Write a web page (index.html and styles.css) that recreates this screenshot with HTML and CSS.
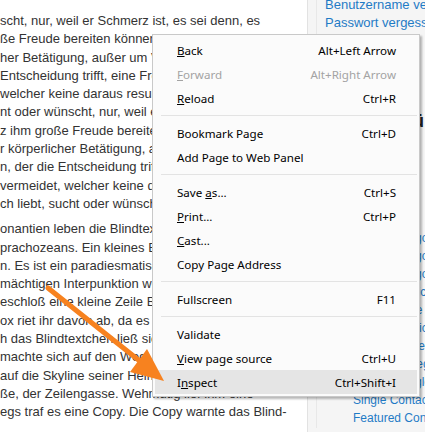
FILE: index.html
```html
<!DOCTYPE html>
<html lang="de">
<head>
<meta charset="utf-8">
<title>Kontextmenü</title>
<link rel="stylesheet" href="styles.css">
</head>
<body>
<div class="page">
  <main class="content">
    <p class="para">
      <span class="ln">scht, nur, weil er Schmerz ist, es sei denn, es</span>
      <span class="ln">ße Freude bereiten können. Um ein triviales</span>
      <span class="ln">her Betätigung, außer um Vorteile daraus zu</span>
      <span class="ln">Entscheidung trifft, eine Freude zu genießen, die</span>
      <span class="ln">welcher keine daraus resultierende Freude</span>
      <span class="ln">nt oder wünscht, nur, weil er Schmerz ist, es sei</span>
      <span class="ln">z ihm große Freude bereiten können. Um ein</span>
      <span class="ln">r körperlicher Betätigung, außer um Vorteile</span>
      <span class="ln">n, der die Entscheidung trifft, eine Freude zu</span>
      <span class="ln">vermeidet, welcher keine daraus resultierende</span>
      <span class="ln">ch liebt, sucht oder wünscht, nur, weil er</span>
    </p>
    <p class="para">
      <span class="ln">onantien leben die Blindtexte. Abgeschieden</span>
      <span class="ln">prachozeans. Ein kleines Bächlein namens Duden</span>
      <span class="ln">n. Es ist ein paradiesmatisches Land, in dem</span>
      <span class="ln">mächtigen Interpunktion werden die Blindtexte</span>
      <span class="ln">eschloß eine kleine Zeile Blindtext, ihr Name</span>
      <span class="ln">ox riet ihr davon ab, da es dort wimmele von</span>
      <span class="ln">h das Blindtextchen ließ sich nicht beirren. Es</span>
      <span class="ln">machte sich auf den Weg. Als es die ersten</span>
      <span class="ln">auf die Skyline seiner Heimatstadt</span>
      <span class="ln">ße, der Zeilengasse. Wehmütig lief ihm eine</span>
      <span class="ln">egs traf es eine Copy. Die Copy warnte das Blind-</span>
    </p>
  </main>
  <aside class="sidebar">
    <div class="module">
      <ul class="login-links">
        <li><a href="#">Benutzername vergessen?</a></li>
        <li><a href="#">Passwort vergessen?</a></li>
      </ul>
      <h3 class="mod-title">Hauptmenü</h3>
      <ul class="menu-links">
        <li><a href="#">Home</a></li>
        <li><a href="#">Article Categories</a></li>
        <li><a href="#">Article Category Blog</a></li>
        <li><a href="#">Article Category List</a></li>
        <li><a href="#">Archived Articles</a></li>
        <li><a href="#">Single Article</a></li>
        <li><a href="#">Featured Articles</a></li>
        <li><a href="#">Create Article</a></li>
        <li><a href="#">Contact Categories</a></li>
        <li><a href="#">Contact Single Category</a></li>
        <li><a href="#">Single Contact</a></li>
        <li><a href="#">Featured Contacts</a></li>
      </ul>
    </div>
  </aside>
</div>

<svg class="arrow" width="425" height="432" viewBox="0 0 425 432" aria-hidden="true">
  <line x1="48" y1="288" x2="141" y2="362" stroke="#f7821f" stroke-width="5" stroke-linecap="round"/>
  <polygon points="164,381 130,372 147,349" fill="#f7821f"/>
</svg>

<div class="ctx-menu" role="menu">
  <div class="item"><span class="label"><u>B</u>ack</span><span class="key">Alt+Left Arrow</span></div>
  <div class="item disabled"><span class="label"><u>F</u>orward</span><span class="key">Alt+Right Arrow</span></div>
  <div class="item"><span class="label"><u>R</u>eload</span><span class="key">Ctrl+R</span></div>
  <div class="sep"></div>
  <div class="item"><span class="label">Bookmark Page</span><span class="key">Ctrl+D</span></div>
  <div class="item"><span class="label">Add Page to Web Panel</span><span class="key"></span></div>
  <div class="sep"></div>
  <div class="item"><span class="label">Save <u>a</u>s...</span><span class="key">Ctrl+S</span></div>
  <div class="item"><span class="label"><u>P</u>rint...</span><span class="key">Ctrl+P</span></div>
  <div class="item"><span class="label"><u>C</u>ast...</span><span class="key"></span></div>
  <div class="item"><span class="label">Copy Page Address</span><span class="key"></span></div>
  <div class="sep"></div>
  <div class="item"><span class="label">Fullscreen</span><span class="key">F11</span></div>
  <div class="sep"></div>
  <div class="item"><span class="label">Validate</span><span class="key"></span></div>
  <div class="item"><span class="label"><u>V</u>iew page source</span><span class="key">Ctrl+U</span></div>
  <div class="item active"><span class="label">I<u>n</u>spect</span><span class="key">Ctrl+Shift+I</span></div>
</div>
</body>
</html>
```

FILE: styles.css
```css
html, body {
  margin: 0;
  padding: 0;
}

body {
  width: 425px;
  height: 432px;
  overflow: hidden;
  background: #ffffff;
  position: relative;
  font-family: "Liberation Sans", Arial, sans-serif;
}

.page {
  display: flex;
  height: 432px;
}

.content {
  width: 307px;
  flex: none;
  overflow: hidden;
  padding-top: 12px;
  box-sizing: border-box;
}

.para {
  margin: 0 0 7px 0;
  font-size: 13px;
  line-height: 18.3px;
  color: #333333;
}

.ln {
  display: block;
  white-space: nowrap;
}

.sidebar {
  flex: 1;
  background: #f5f5f5;
  border-left: 1px solid #e2e2e2;
  overflow: hidden;
  padding-left: 8px;
}

.module {
  border-left: 1px solid #e8e8e8;
  height: 100%;
  padding-left: 8px;
  margin-top: -4px;
}

.login-links,
.menu-links {
  list-style: none;
  margin: 0;
  padding: 0;
}

.login-links li {
  font-size: 13px;
  line-height: 17.5px;
  white-space: nowrap;
}

a {
  color: #1f7bc6;
  text-decoration: none;
}

.mod-title {
  margin: 78px 0 0 0;
  font-size: 18px;
  line-height: 24px;
  color: #222222;
  white-space: nowrap;
}

.menu-links {
  margin-top: 78px;
  padding-left: 28px;
}

.menu-links li {
  font-size: 12px;
  line-height: 18px;
  white-space: nowrap;
}

.arrow {
  position: absolute;
  left: 0;
  top: 0;
  z-index: 3;
  pointer-events: none;
}

.ctx-menu {
  position: absolute;
  left: 152px;
  top: 34px;
  width: 268px;
  box-sizing: border-box;
  padding: 3px 2px 2px 2px;
  background: #fbfbfb;
  border: 1px solid #c9c9c9;
  box-shadow: 2px 2px 2px rgba(0, 0, 0, 0.28);
  font-family: "Noto Sans", "Open Sans", sans-serif;
  font-size: 11.6px;
  color: #000000;
  z-index: 2;
}

.item {
  display: flex;
  justify-content: space-between;
  align-items: center;
  height: 24px;
  padding: 0 21px 0 22px;
  white-space: nowrap;
}

.item.disabled {
  color: #a3a3a3;
}

.item.active {
  background: #e5e5e5;
}

.sep {
  height: 1px;
  background: #e3e3e3;
  margin: 5px 0 5px 6px;
}
```
